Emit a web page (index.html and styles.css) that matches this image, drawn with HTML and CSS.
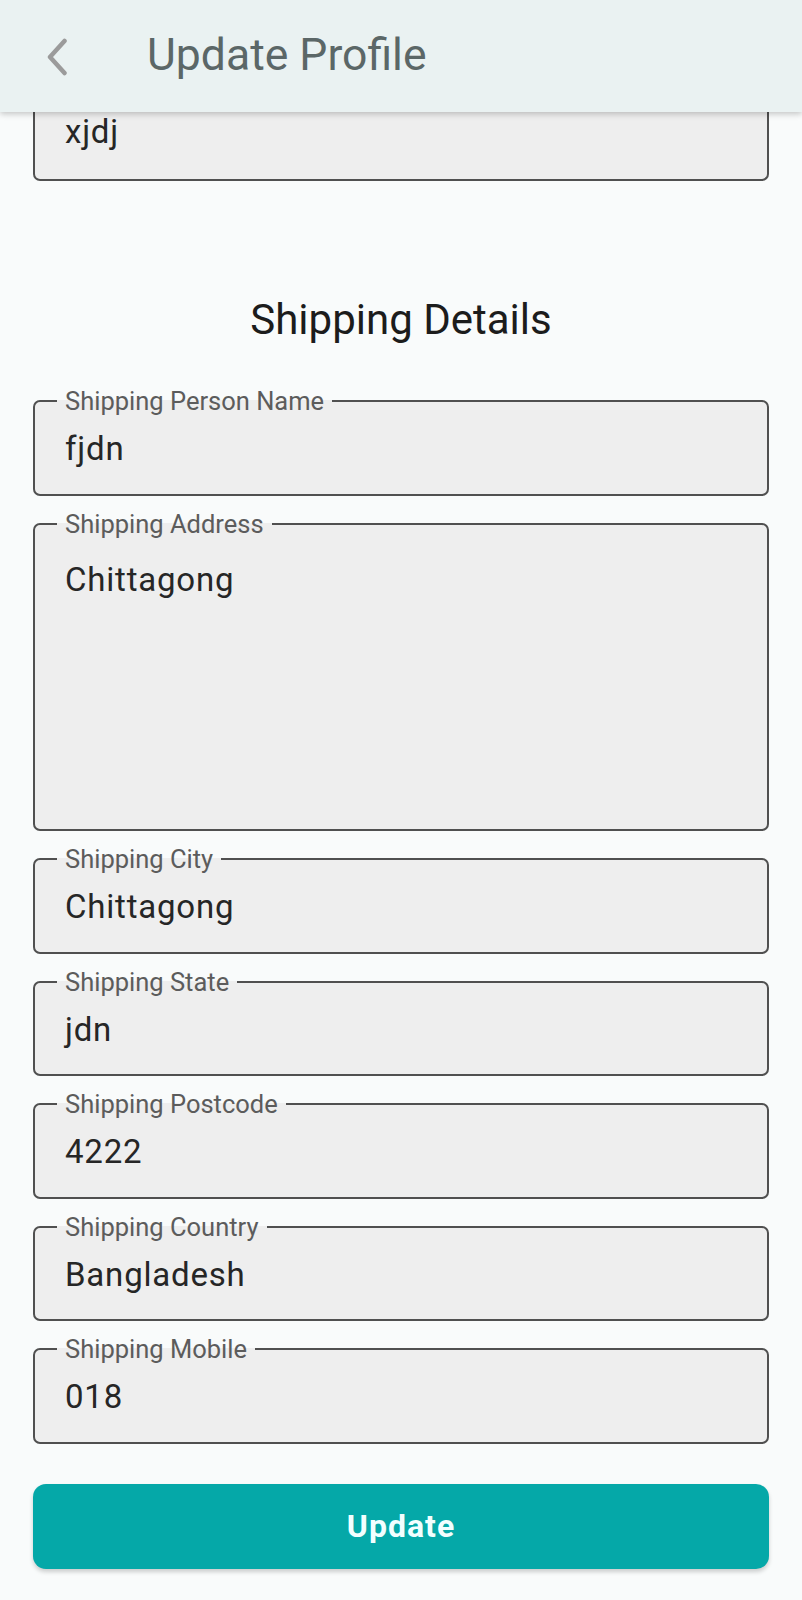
FILE: index.html
```html
<!DOCTYPE html>
<html lang="en">
<head>
<meta charset="utf-8">
<title>Update Profile</title>
<link rel="stylesheet" href="styles.css">
</head>
<body>
<header class="appbar">
  <button class="appbar__back" aria-label="Back">
    <svg width="22" height="38" viewBox="0 0 22 38"><path d="M18.5 3 L4 19 L18.5 35" fill="none" stroke="#9b9b9b" stroke-width="4.5" stroke-linecap="round" stroke-linejoin="round"/></svg>
  </button>
  <h1 class="appbar__title">Update Profile</h1>
</header>
<main class="content">
  <div class="field field--cut">
    <div class="field__value">xjdj</div>
  </div>

  <h2 class="section-title">Shipping Details</h2>

  <div class="fields">
    <fieldset class="field">
      <legend class="field__label">Shipping Person Name</legend>
      <div class="field__value">fjdn</div>
    </fieldset>
    <fieldset class="field field--multi">
      <legend class="field__label">Shipping Address</legend>
      <div class="field__value">Chittagong</div>
    </fieldset>
    <fieldset class="field">
      <legend class="field__label">Shipping City</legend>
      <div class="field__value">Chittagong</div>
    </fieldset>
    <fieldset class="field">
      <legend class="field__label">Shipping State</legend>
      <div class="field__value">jdn</div>
    </fieldset>
    <fieldset class="field">
      <legend class="field__label">Shipping Postcode</legend>
      <div class="field__value">4222</div>
    </fieldset>
    <fieldset class="field">
      <legend class="field__label">Shipping Country</legend>
      <div class="field__value">Bangladesh</div>
    </fieldset>
    <fieldset class="field">
      <legend class="field__label">Shipping Mobile</legend>
      <div class="field__value">018</div>
    </fieldset>
  </div>

  <button class="submit">Update</button>
</main>
</body>
</html>
```
FILE: styles.css
```css
* { box-sizing: border-box; }

html, body {
  margin: 0;
  padding: 0;
  background: #f9fbfb;
  font-family: Roboto, "Noto Sans", "Liberation Sans", sans-serif;
}

.appbar {
  position: relative;
  z-index: 2;
  height: 112px;
  display: flex;
  align-items: center;
  padding-left: 46px;
  background: #eaf2f2;
  box-shadow: 0 2px 6px rgba(0, 0, 0, 0.22);
}

.appbar__back {
  display: flex;
  padding: 0;
  margin: 0;
  border: 0;
  background: none;
  margin-top: 1px;
}

.appbar__title {
  margin: -2px 0 0 79px;
  font-size: 44.5px;
  font-weight: 400;
  line-height: 50px;
  color: #5b6767;
}

.content {
  padding: 0 33px 30px;
}

.field {
  margin: 0;
  padding: 13px 22px 24.5px;
  min-width: 0;
  border: 2px solid #505050;
  border-radius: 7px;
  background: #eeeeee;
}

.field--cut {
  border-top: 0;
  border-top-left-radius: 0;
  border-top-right-radius: 0;
  padding-top: 0;
  padding-bottom: 27px;
}

.field__label {
  padding: 0 8px;
  font-size: 25.5px;
  line-height: 30px;
  color: #5c5c5c;
  letter-spacing: 0;
}

.field__value {
  padding-left: 8px;
  font-size: 33px;
  line-height: 40px;
  color: #262626;
  letter-spacing: 0.8px;
}

.field--multi {
  padding-top: 21px;
}

.field--multi .field__value {
  min-height: 245px;
}

.section-title {
  margin: 114px 0 41px;
  font-size: 42px;
  line-height: 50px;
  font-weight: 400;
  text-align: center;
  color: #1c1c1c;
}

.fields {
  display: flex;
  flex-direction: column;
  gap: 13px;
}

.submit {
  display: block;
  width: 100%;
  height: 85px;
  margin-top: 40px;
  border: 0;
  border-radius: 13px;
  background: #05a8a8;
  color: #f2ffff;
  font-family: Roboto, "Noto Sans", "Liberation Sans", sans-serif;
  font-size: 32px;
  font-weight: 700;
  letter-spacing: 1px;
  box-shadow: 0 3px 4px rgba(0, 0, 0, 0.18);
}
```
